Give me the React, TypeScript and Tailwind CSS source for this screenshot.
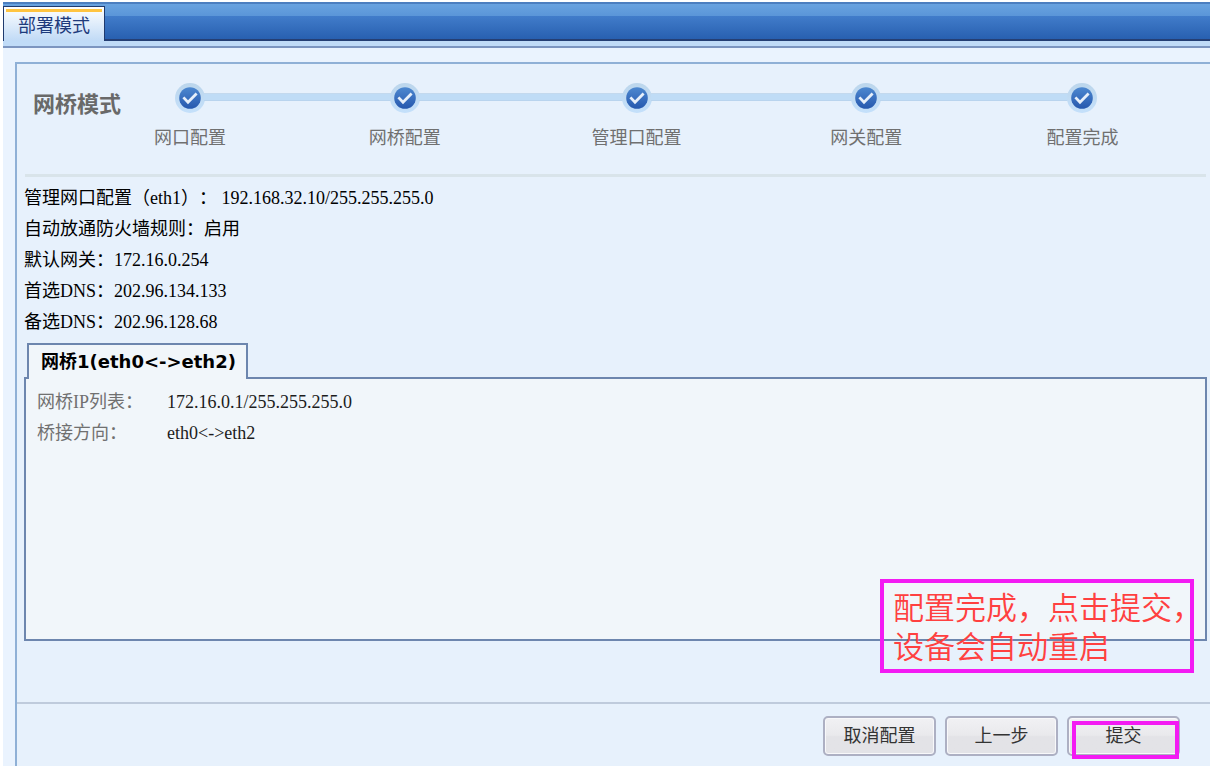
import React from "react";

const steps = ["网口配置", "网桥配置", "管理口配置", "网关配置", "配置完成"];

const summary = [
  { label: "管理网口配置（eth1）：", value: "\u00a0192.168.32.10/255.255.255.0" },
  { label: "自动放通防火墙规则：", value: "启用" },
  { label: "默认网关：", value: "172.16.0.254" },
  { label: "首选DNS：", value: "202.96.134.133" },
  { label: "备选DNS：", value: "202.96.128.68" },
];

const bridge = [
  { label: "网桥IP列表：", value: "172.16.0.1/255.255.255.0" },
  { label: "桥接方向：", value: "eth0<->eth2" },
];

function StepBadge() {
  return (
    <svg width="30" height="30" viewBox="0 0 30 30" className="-mx-px shrink-0" aria-hidden="true">
      <defs>
        <linearGradient id="halo" x1="0" y1="0" x2="0" y2="1">
          <stop offset="0" stopColor="#bcd6ec" />
          <stop offset="1" stopColor="#c4e0fb" />
        </linearGradient>
        <linearGradient id="disc" x1="0" y1="0" x2="0" y2="1">
          <stop offset="0" stopColor="#4d88d0" />
          <stop offset="1" stopColor="#2658ae" />
        </linearGradient>
      </defs>
      <circle cx="15" cy="15" r="15" fill="url(#halo)" />
      <circle cx="15" cy="15" r="10.8" fill="url(#disc)" />
      <path d="M8.4 14.4 L13 19.2 L21.6 10.4" fill="none" stroke="#e6effa" strokeWidth="2.8" />
    </svg>
  );
}

function Line({ hidden }: { hidden: boolean }) {
  return (
    <span
      className={
        hidden
          ? "h-2 flex-1"
          : "mb-0.5 h-2 flex-1 border-y border-t-[#c3d9ee] border-b-[#b9d4ee] bg-[#bfdcf6]"
      }
    />
  );
}

function ActionButton({ children, marked = false }: { children: React.ReactNode; marked?: boolean }) {
  return (
    <button
      type="button"
      className="relative h-10 w-[113px] rounded-[5px] border-2 border-[#adb0c3] bg-linear-to-b from-[#f1f1f4] from-0% via-[#e9e9ec] via-48% to-[#e3e3e7] to-52% text-[18px] leading-9 text-[#333] shadow-[inset_0_0_0_1px_#f8f8fa]"
    >
      {children}
      {marked && <span className="absolute -right-px -bottom-[5px] h-[38px] w-[107px] border-4 border-[#f31bf3]" />}
    </button>
  );
}

export default function App() {
  return (
    <div className="flex min-h-screen flex-col bg-white pt-0.5 pb-0.5 pl-[3px] font-['Liberation_Serif','Noto_Sans_CJK_SC',serif] text-[18px] text-black [text-spacing-trim:space-all]">
      <header className="flex h-[39px] items-end border-t-2 border-b-2 border-t-[#4c7fc0] border-b-[#253f74] bg-linear-to-b from-[#69a3e0] from-0% via-[#5a95d8] via-35% to-[#2860b0] to-100%">
        <div className="flex h-full w-full items-end bg-linear-to-b from-transparent from-35% via-[#417cca] via-35% to-[#2860b0]">
          <div className="-mb-0.5 h-[35px] w-[102px] border border-b-0 border-[#1f3a6e] bg-linear-to-b from-white to-[#c0daf6] px-0.5 pt-0.5">
            <a
              href="#mode"
              className="block border-t-3 border-[#ffc440] text-center text-[18px] leading-7 text-[#1d3a7c]"
            >
              部署模式
            </a>
          </div>
        </div>
      </header>
      <div className="h-[7px] border-b-2 border-[#7c95c0] bg-[#c0dbf7]" />

      <div className="flex flex-1 flex-col bg-[#eaf3fe] pt-3.5 pl-3">
        <main className="flex flex-1 flex-col border-t-2 border-l-2 border-[#8fb0d6] bg-[#e7f1fc]">
          <section className="ml-2 mr-1 flex h-[113px] border-b-3 border-[#d9e4ea] pt-[19px]">
            <h1 className="w-[100px] shrink-0 pt-1.5 pl-2 text-[22px] leading-8 font-bold whitespace-nowrap text-[#696969]">
              网桥模式
            </h1>
            <ol className="mr-[55px] grid flex-1 grid-cols-[130fr_299fr_164fr_295fr_137fr]">
              {steps.map((step, i) => (
                <li key={step} className="flex flex-col">
                  <div className="flex items-center">
                    <Line hidden={i === 0} />
                    <StepBadge />
                    <Line hidden={i === steps.length - 1} />
                  </div>
                  <span className="pt-[11px] text-center leading-7 whitespace-nowrap text-[#707070]">{step}</span>
                </li>
              ))}
            </ol>
          </section>

          <dl className="pt-1.5 pl-[7px]">
            {summary.map((row) => (
              <div key={row.label} className="flex h-[31px] leading-[31px]">
                <dt>{row.label}</dt>
                <dd>{row.value}</dd>
              </div>
            ))}
          </dl>

          <section className="relative mt-[5px] mr-[3px] ml-[7px]">
            <h2 className="relative ml-[3px] -mb-0.5 h-9 w-[221px] border-2 border-b-0 border-[#6d86ae] bg-[#f1f6fa] pl-3 font-['DejaVu_Sans','Noto_Sans_CJK_SC',sans-serif] leading-[34px] font-bold whitespace-nowrap">
              网桥1(eth0&lt;-&gt;eth2)
            </h2>
            <dl className="h-[264px] border-2 border-[#6d86ae] bg-[#f1f6fa] pt-2 pl-[11px]">
              {bridge.map((row) => (
                <div key={row.label} className="flex h-[31px] leading-[31px]">
                  <dt className="w-[130px] text-[#707070]">{row.label}</dt>
                  <dd className="text-[#1c1c1c]">{row.value}</dd>
                </div>
              ))}
            </dl>
            <p className="absolute right-[13px] -bottom-8 h-[94px] w-[314px] border-4 border-[#f31bf3] pt-1.5 pl-[9px] text-[31px] leading-[39px] font-[350] whitespace-nowrap text-[#ff4040]">
              配置完成，点击提交，
              <br />
              设备会自动重启
            </p>
          </section>

          <footer className="mt-auto flex h-16 justify-end gap-[9px] border-t-2 border-[#bfcbdc] pt-3 pr-[30px]">
            <ActionButton>取消配置</ActionButton>
            <ActionButton>上一步</ActionButton>
            <ActionButton marked>提交</ActionButton>
          </footer>
        </main>
      </div>
    </div>
  );
}
